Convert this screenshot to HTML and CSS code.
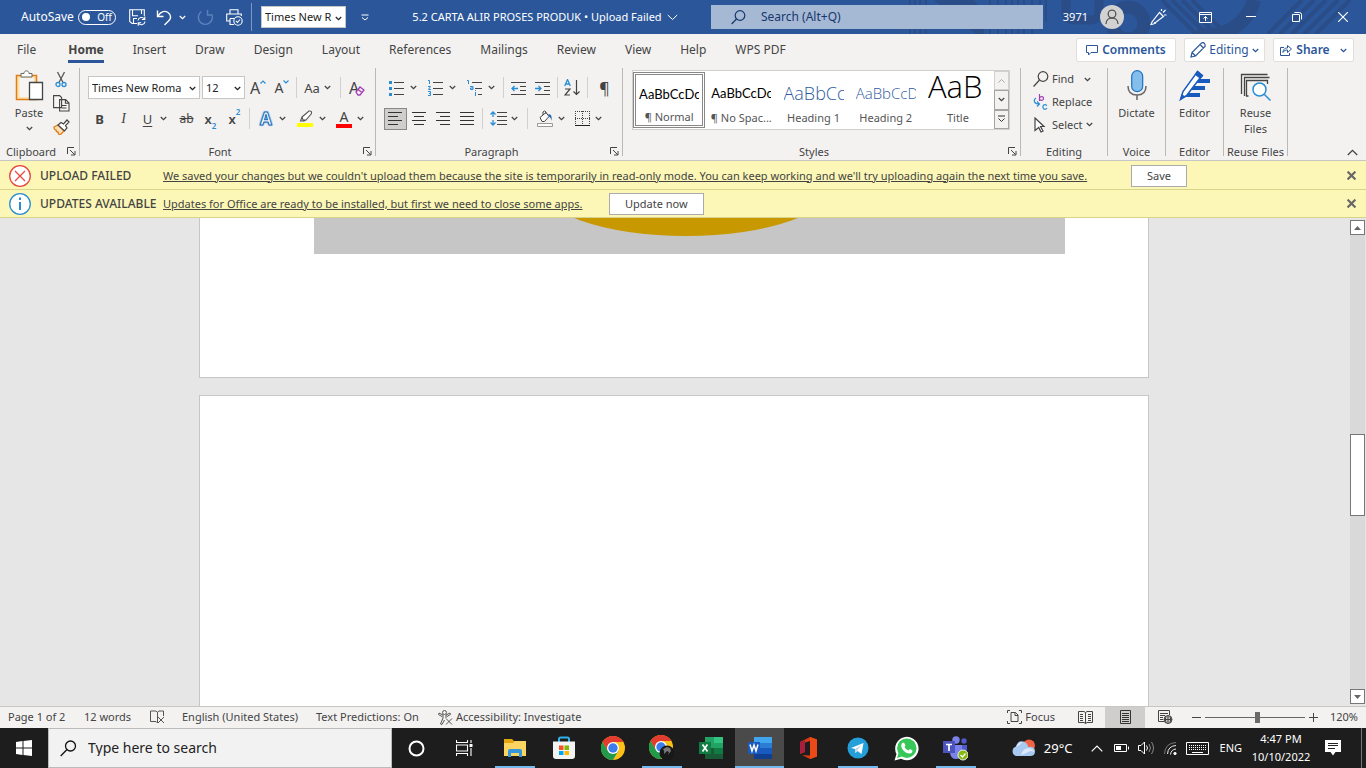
FILE: index.html
```html
<!DOCTYPE html>
<html lang="en">
<head>
<meta charset="utf-8">
<title>5.2 CARTA ALIR PROSES PRODUK - Word</title>
<link rel="stylesheet" href="styles.css">
</head>
<body>
<svg class="defs" aria-hidden="true">
  <symbol id="chev" viewBox="0 0 7 5"><path d="M.8 1l2.700 2.600L6.200 1" fill="none" stroke="currentColor" stroke-width="1.300"/></symbol>
  <symbol id="launch" viewBox="0 0 9 9"><path d="M.5 7V.5H7M3 3l4.500 4.500M8 4v4H4" fill="none" stroke="currentColor"/></symbol>
  <symbol id="cross" viewBox="0 0 8 8"><path d="M.5.500l7 7M7.500.500l-7 7" stroke="currentColor" stroke-width="1.900"/></symbol>
  <symbol id="chrome" viewBox="0 0 24 24">
    <circle cx="12" cy="12" r="12" fill="#fbc116"/>
    <path d="M12 6h10.400A12 12 0 0 0 1.600 6l5.200 9z" fill="#e33b2e"/>
    <path d="M6.800 15L1.600 6A12 12 0 0 0 12 24l5.200-9z" fill="#229a4b"/>
    <circle cx="12" cy="12" r="6" fill="#fff"/><circle cx="12" cy="12" r="4.700" fill="#3b7ded"/>
  </symbol>
</svg>

<header class="titlebar">
  <svg class="titlebar-art" viewBox="0 0 460 34" aria-hidden="true">
    <g stroke="#2a4d88" fill="none">
      <path d="M4 0v34M9 0v34M14 0v34M20 0v34" stroke-width="2"/>
      <path d="M28 0h40l10 14v20h-8z" fill="#2a4d88" stroke="none"/>
      <path d="M84 0v34M92 0v34M100 0v34M106 0v34M112 0v34M118 0v34M126 0v34M134 0v30M140 0v22" stroke-width="2"/>
      <path d="M160 0v12q0 8 8 8h16q9 0 9-8V0" stroke-width="9"/>
      <circle cx="222" cy="23" r="16" stroke-width="13"/>
      <path d="M256 0l34 34M266 0l34 34M276 0l34 34M286 0l34 34" stroke-width="4"/>
      <path d="M290 34a48 48 0 0 0 58-34" stroke-width="14"/>
      <path d="M362 34l34-34M374 34l34-34M386 34l34-34M398 34l34-34M410 34l34-34" stroke-width="4"/>
    </g>
  </svg>
  <div class="quick">
    <span class="quick-label" id="autosave">AutoSave</span>
    <button class="toggle" aria-labelledby="autosave"><span class="toggle-dot"></span>Off</button>
    <button class="quick-btn" aria-label="Save"><svg width="17" height="17" viewBox="0 0 17 17" fill="none" stroke="#fff" stroke-width="1.100"><path d="M8 14.500H3L.7 12.500V.7h14.600V7M3.500.7v6H9M12.500.7V5M4.500 14v-4.500H8"/><path d="M9 11.500a3.600 3.600 0 0 1 6.500-1.500M15.800 7.500v3h-3M16 12.500a3.600 3.600 0 0 1-6.500 1.700M9.200 16.800v-3h3"/></svg></button>
    <button class="quick-btn quick-split" aria-label="Undo"><svg width="16" height="17" viewBox="0 0 16 17" fill="none" stroke="#fff" stroke-width="1.400"><path d="M1.500 1.500v6h6M2 7C5 2 9 1.500 12 3.500c3.500 2.500 3 6 1 8L8.500 16"/></svg><svg class="chev" width="7" height="5"><use href="#chev"/></svg></button>
    <button class="quick-btn" aria-label="Redo" disabled><svg width="17" height="17" viewBox="0 0 17 17" fill="none" stroke="#5d82bd" stroke-width="1.400"><path d="M10.500 1v5h5M4.500 2.500a7 7 0 1 0 10 2.500"/></svg></button>
    <button class="quick-btn" aria-label="Print preview"><svg width="17" height="17" viewBox="0 0 17 17" fill="none" stroke="#fff" stroke-width="1.100"><path d="M4 5V.7h8V5M4 12H.7V5h14.600v2M4 9.500h4M4 9.500v6h4"/><circle cx="12" cy="12" r="4.200"/><path d="M10 12l1.500 1.500 2.500-3"/></svg></button>
    <span class="quick-sep"></span>
    <div class="field field-quick"><select aria-label="Quick font"><option>Times New R</option></select><svg class="chev" width="7" height="5"><use href="#chev"/></svg></div>
    <button class="quick-btn quick-more" aria-label="Customize toolbar"><svg width="8" height="7" viewBox="0 0 8 7" fill="none" stroke="#fff"><path d="M.5 1h7M1 3.500l3 2.500 3-2.500"/></svg></button>
  </div>
  <button class="doc-title">5.2 CARTA ALIR PROSES PRODUK • Upload Failed <svg width="11" height="7" viewBox="0 0 11 7" fill="none" stroke="#fff"><path d="M.8 1l4.700 4.500L10.200 1"/></svg></button>
  <label class="title-search"><svg width="15" height="15" viewBox="0 0 15 15" fill="none" stroke="#17376e" stroke-width="1.200"><circle cx="9" cy="5.500" r="4.800"/><path d="M5.500 9L.6 14"/></svg><input type="text" placeholder="Search (Alt+Q)" aria-label="Search"></label>
  <div class="account">
    <span>3971</span>
    <button class="avatar" aria-label="Account"><svg width="14" height="16" viewBox="0 0 14 16" fill="none" stroke="#555" stroke-width="1.300"><circle cx="7" cy="5" r="3.800"/><path d="M1 15c0-8 12-8 12 0"/></svg></button>
    <button class="win-btn" aria-label="Coming soon"><svg width="18" height="18" viewBox="0 0 18 18" fill="none" stroke="#fff" stroke-width="1.200"><path d="M9.500 4.500l4 4-10 7.500L1 16.500 2 14zM4 14.500l2 1M11.500 3V1M13 4.500L15.500 2M14 7h2.500"/></svg></button>
    <button class="win-btn" aria-label="Ribbon display"><svg width="13" height="11" viewBox="0 0 13 11" fill="none" stroke="#fff"><path d="M.5.5h12v10H.5zM.5 2.500h12M6.500 9V4.500M4.500 6.500l2-2 2 2"/></svg></button>
    <button class="win-btn" aria-label="Minimize"><svg width="10" height="10" viewBox="0 0 10 10" stroke="#fff"><path d="M0 4.500h10"/></svg></button>
    <button class="win-btn" aria-label="Restore"><svg width="10" height="10" viewBox="0 0 10 10" fill="none" stroke="#fff"><path d="M.5 2.500h7v7h-7zM2.500.5h5q2 0 2 2v5"/></svg></button>
    <button class="win-btn" aria-label="Close"><svg width="10" height="10" viewBox="0 0 10 10" stroke="#fff" stroke-width="1.100"><path d="M0 0l10 10M10 0L0 10"/></svg></button>
  </div>
</header>

<nav class="tabs">
  <button class="tab tab-file">File</button><button class="tab tab-active">Home</button><button class="tab">Insert</button><button class="tab">Draw</button><button class="tab">Design</button><button class="tab">Layout</button><button class="tab">References</button><button class="tab">Mailings</button><button class="tab">Review</button><button class="tab">View</button><button class="tab">Help</button><button class="tab">WPS PDF</button>
  <div class="tab-actions">
    <button class="action action-comments"><svg width="12" height="11" viewBox="0 0 12 11" fill="none" stroke="#2b579a"><path d="M.5.5h11v7H5l-2.500 2.500V7.500h-2z"/></svg>Comments</button>
    <button class="action action-edit"><svg width="16" height="16" viewBox="0 0 16 16" fill="none" stroke="#2b579a" stroke-width="1.200"><path d="M1 15l1-4.500L11.500 1q2-1 3 .5T15 4.500L5.500 14zM10 2.500l3.500 3.500M2 10.500L5.500 14"/></svg>Editing<svg class="chev" width="7" height="5"><use href="#chev"/></svg></button>
    <button class="action action-share"><svg width="12" height="12" viewBox="0 0 12 12" fill="none" stroke="#2b579a"><path d="M4 3.500H.5v8h9V9M3 8.500C3 5 5 4 7.500 4V1.500L11.500 5l-4 3.500V6C5.500 6 4 6.500 3 8.500z"/></svg>Share<svg class="chev share-chev" width="7" height="5"><use href="#chev"/></svg></button>
  </div>
</nav>

<section class="ribbon" aria-label="Home tools">
  <div class="group g-clipboard">
    <div class="group-body clipboard">
      <button class="big paste"><svg width="29" height="31" viewBox="0 0 29 31" fill="none"><path d="M1.500 5.500h20v24h-20z" fill="#fce3b0" stroke="#e07b16" stroke-width="1.500"/><path d="M4.500 8h14v19h-14z" fill="#f6f5f4"/><path d="M6 7V3.500h3C9 0 14 0 14 3.500h3V7z" fill="#fff" stroke="#666"/><path d="M14.500 12.500h13v17h-13z" fill="#fff" stroke="#444" stroke-width="1.300"/></svg><span>Paste</span><svg class="chev" width="7" height="5"><use href="#chev"/></svg></button>
      <div class="stack">
        <button class="mini" aria-label="Cut"><svg width="12" height="17" viewBox="0 0 12 17" fill="none"><path d="M2.500 1l5.500 10.500M9.500 1L4 11.500" stroke="#555" stroke-width="1.300"/><circle cx="3" cy="13.500" r="2" stroke="#2a8dd4" stroke-width="1.300"/><circle cx="9" cy="13.500" r="2" stroke="#2a8dd4" stroke-width="1.300"/></svg></button>
        <button class="mini" aria-label="Copy"><svg width="17" height="17" viewBox="0 0 17 17" fill="#f6f5f4" stroke="#444" stroke-width="1.100"><path d="M.6.600h6l2 2v10h-8zM6.600 4.600h6l3.400 3.400v8H6.600zM12.400 4.600v3.600H16M9 10.500h4.500M9 13h4.500"/></svg></button>
        <button class="mini" aria-label="Format painter"><svg width="17" height="16" viewBox="0 0 17 16"><path d="M1 8l4-2 6 6-4 4q-2-1-2-3-2 0-2-2-2 0-2-3z" fill="#fbe2b8" stroke="#e07b16" stroke-width="1.300"/><path d="M5 6l3-2.500 2.500 1.500L14 1l2 2-3.500 3.500L14 9l-2.500 3z" fill="#fff" stroke="#444" stroke-width="1.200"/></svg></button>
      </div>
    </div>
    <div class="group-label">Clipboard<button class="launch" aria-label="Clipboard options"><svg width="9" height="9"><use href="#launch"/></svg></button></div>
  </div>

  <div class="group g-font">
    <div class="group-body rows">
      <div class="row row-fonts">
        <div class="field field-font"><select aria-label="Font"><option>Times New Roma</option></select><svg class="chev" width="7" height="5"><use href="#chev"/></svg></div>
        <div class="field field-size"><select aria-label="Font size"><option>12</option></select><svg class="chev" width="7" height="5"><use href="#chev"/></svg></div>
        <button class="tool" aria-label="Grow font"><span class="glyph-lg">A</span><svg class="sup" width="6" height="4" viewBox="0 0 6 4" fill="none" stroke="#2a8dd4" stroke-width="1.200"><path d="M.5 3.500L3 1l2.500 2.500"/></svg></button>
        <button class="tool" aria-label="Shrink font"><span class="glyph-md">A</span><svg class="sup" width="6" height="4" viewBox="0 0 6 4" fill="none" stroke="#2a8dd4" stroke-width="1.200"><path d="M.5.500L3 3 5.500.500"/></svg></button>
        <span class="sep"></span>
        <button class="tool tool-case" aria-label="Change case"><span>Aa</span><svg class="chev" width="7" height="5"><use href="#chev"/></svg></button>
        <span class="sep sep-wide"></span>
        <button class="tool tool-clear" aria-label="Clear formatting"><span class="glyph-lg">A</span><svg width="10" height="10" viewBox="0 0 10 10" fill="#f3f0f5" stroke="#a33fb5" stroke-width="1.300"><path d="M1 6l4-5 4 3-4 5H3zM3 3.500l4 3"/></svg></button>
      </div>
      <div class="row row-tight">
        <button class="tool bold" aria-label="Bold">B</button>
        <button class="tool italic" aria-label="Italic">I</button>
        <button class="tool tool-split" aria-label="Underline"><span class="under">U</span><svg class="chev" width="7" height="5"><use href="#chev"/></svg></button>
        <button class="tool strike" aria-label="Strikethrough">ab</button>
        <button class="tool script" aria-label="Subscript">x<sub>2</sub></button>
        <button class="tool script" aria-label="Superscript">x<sup>2</sup></button>
        <span class="sep"></span>
        <button class="tool tool-color" aria-label="Text effects"><span class="effect">A</span><svg class="chev" width="7" height="5"><use href="#chev"/></svg></button>
        <button class="tool tool-color" aria-label="Highlight"><svg width="17" height="17" viewBox="0 0 17 17"><path d="M5 7l7-6q3-.5 2.500 2.500L9 10H6zM5 7l-1.500 4H7L9 10" fill="#fff" stroke="#555" stroke-width="1.100"/><path d="M0 13h16v4H0z" fill="#ff0"/></svg><svg class="chev" width="7" height="5"><use href="#chev"/></svg></button>
        <button class="tool tool-color" aria-label="Font color"><span class="fontcolor">A</span><svg class="chev" width="7" height="5"><use href="#chev"/></svg></button>
      </div>
    </div>
    <div class="group-label">Font<button class="launch" aria-label="Font options"><svg width="9" height="9"><use href="#launch"/></svg></button></div>
  </div>

  <div class="group g-para">
    <div class="group-body rows">
      <div class="row row-tight">
        <button class="tool tool-para" aria-label="Bullets"><svg width="16" height="16" viewBox="0 0 16 16"><path d="M0 1h3v3H0zM0 7h3v3H0zM0 13h3v3H0z" fill="#2a8dd4"/><path d="M5 2.500h10M5 8.500h10M5 14.500h10" stroke="#444"/></svg><svg class="chev" width="7" height="5"><use href="#chev"/></svg></button>
        <button class="tool tool-para" aria-label="Numbering"><svg width="16" height="16" viewBox="0 0 16 16" fill="none"><path d="M5 2.500h10M5 8.500h10M5 14.500h10" stroke="#444"/><path d="M0 .5h1.500v3.500M0 6.500h2.500L.5 9.500h2.500M0 11.500h2.500v2H1m1.500 0v2H0" stroke="#2a8dd4"/></svg><svg class="chev" width="7" height="5"><use href="#chev"/></svg></button>
        <button class="tool tool-para" aria-label="Multilevel list"><svg width="16" height="16" viewBox="0 0 16 16" fill="none"><path d="M5 2.500h10M8 8.500h7M11 14.500h4" stroke="#444"/><path d="M0 .5h1.500v3.500M3 6.500h3v3H3.500v-1.500H6M8.500 12v4M8.500 10v1" stroke="#2a8dd4"/></svg><svg class="chev" width="7" height="5"><use href="#chev"/></svg></button>
        <span class="sep"></span>
        <button class="tool" aria-label="Decrease indent"><svg width="15" height="14" viewBox="0 0 15 14" fill="none"><path d="M0 1.500h15M9 5.500h6M9 9.500h6M0 13.500h15" stroke="#444"/><path d="M7 7.500H1M3.500 5L1 7.500 3.500 10" stroke="#2a8dd4" stroke-width="1.300"/></svg></button>
        <button class="tool" aria-label="Increase indent"><svg width="15" height="14" viewBox="0 0 15 14" fill="none"><path d="M0 1.500h15M9 5.500h6M9 9.500h6M0 13.500h15" stroke="#444"/><path d="M0 7.500h6M3.500 5L6 7.500 3.500 10" stroke="#2a8dd4" stroke-width="1.300"/></svg></button>
        <span class="sep"></span>
        <button class="tool" aria-label="Sort"><svg width="17" height="17" viewBox="0 0 17 17" fill="none"><path d="M.7 7L3.500.500 6.300 7M1.500 5h4" stroke="#2a8dd4" stroke-width="1.300"/><path d="M1 10h5l-5 6h5M12.500 1v15M9.500 12.500l3 3 3-3" stroke="#444" stroke-width="1.200"/></svg></button>
        <span class="sep"></span>
        <button class="tool pilcrow" aria-label="Show marks">¶</button>
      </div>
      <div class="row row-tight">
        <button class="tool tool-on" aria-label="Align left"><svg width="15" height="14" viewBox="0 0 15 14" stroke="#333"><path d="M0 .5h14M0 4.500h10M0 8.500h14M0 12.500h10"/></svg></button>
        <button class="tool" aria-label="Center"><svg width="15" height="14" viewBox="0 0 15 14" stroke="#333"><path d="M0 .5h14M2 4.500h10M0 8.500h14M2 12.500h10"/></svg></button>
        <button class="tool" aria-label="Align right"><svg width="15" height="14" viewBox="0 0 15 14" stroke="#333"><path d="M0 .5h14M4 4.500h10M0 8.500h14M4 12.500h10"/></svg></button>
        <button class="tool" aria-label="Justify"><svg width="15" height="14" viewBox="0 0 15 14" stroke="#333"><path d="M0 .5h14M0 4.500h14M0 8.500h14M0 12.500h14"/></svg></button>
        <span class="sep"></span>
        <button class="tool tool-fill" aria-label="Line spacing"><svg width="17" height="15" viewBox="0 0 17 15" fill="none"><path d="M7 1.500h10M7 5.500h10M7 9.500h10M7 13.500h10" stroke="#444"/><path d="M3 1v5M.5 3.500L3 1l2.500 2.500M3 9v5M.5 11.500L3 14l2.500-2.500" stroke="#2a8dd4" stroke-width="1.300"/></svg><svg class="chev" width="7" height="5"><use href="#chev"/></svg></button>
        <span class="sep sep-wide"></span>
        <button class="tool tool-fill" aria-label="Shading"><svg width="17" height="17" viewBox="0 0 17 17" fill="none"><path d="M3 7.500l6-5 3 4-4.500 5H5zM6 5V2q1.500-2 3 0v2" stroke="#444" fill="#fff"/><path d="M11.500 4q4 0 3 7-.5-4-3-4.500z" fill="#2566b0"/><path d="M.5 13.500h15v3H.5z" fill="#fff" stroke="#999"/></svg><svg class="chev" width="7" height="5"><use href="#chev"/></svg></button>
        <button class="tool tool-fill" aria-label="Borders"><svg width="16" height="16" viewBox="0 0 16 16"><path d="M0 .5h15M0 7.500h15M.5 0v15M7.500 0v15M14.500 0v15" stroke="#444" stroke-dasharray="1 1"/><path d="M0 14.500h15" stroke="#222"/></svg><svg class="chev" width="7" height="5"><use href="#chev"/></svg></button>
      </div>
    </div>
    <div class="group-label">Paragraph<button class="launch" aria-label="Paragraph options"><svg width="9" height="9"><use href="#launch"/></svg></button></div>
  </div>

  <div class="group g-styles">
    <div class="group-body">
      <div class="gallery">
        <button class="style style-on"><span class="sample">AaBbCcDc</span><span>¶ Normal</span></button>
        <button class="style"><span class="sample">AaBbCcDc</span><span>¶ No Spac...</span></button>
        <button class="style"><span class="sample sample-h1">AaBbCc</span><span>Heading 1</span></button>
        <button class="style"><span class="sample sample-h2">AaBbCcD</span><span>Heading 2</span></button>
        <button class="style"><span class="sample sample-title">AaB</span><span>Title</span></button>
        <div class="gallery-nav">
          <button disabled aria-label="Previous styles"><svg width="7" height="4" viewBox="0 0 7 4" fill="none" stroke="#aaa"><path d="M.5 3.500l3-3 3 3"/></svg></button>
          <button aria-label="Next styles"><svg width="7" height="5"><use href="#chev"/></svg></button>
          <button aria-label="More styles"><svg width="7" height="8" viewBox="0 0 7 8" fill="none" stroke="#333"><path d="M0 1h7M.5 3.500l3 3 3-3"/></svg></button>
        </div>
      </div>
    </div>
    <div class="group-label">Styles<button class="launch" aria-label="Style options"><svg width="9" height="9"><use href="#launch"/></svg></button></div>
  </div>

  <div class="group g-editing">
    <div class="group-body edit-list">
      <button class="edit"><svg width="16" height="16" viewBox="0 0 16 16" fill="none" stroke="#444" stroke-width="1.200"><circle cx="10" cy="5.500" r="4.800"/><path d="M6.500 9L.6 15.500"/></svg>Find<svg class="chev find-chev" width="7" height="5"><use href="#chev"/></svg></button>
      <button class="edit"><svg width="16" height="16" viewBox="0 0 16 16" fill="none" stroke-width="1.200"><path d="M6.500 0v7M6.500 4.500c0-2.500 4-2.500 4 0s-4 2.500-4 0" stroke="#a33fb5"/><path d="M14 11.500c-3-2-4.500 0-4 2s2.500 2.500 4 .5M3 4C0 6 1 10 6 10M4 7.500L6.500 10 4 12.500" stroke="#2a8dd4"/></svg>Replace</button>
      <button class="edit"><svg width="16" height="16" viewBox="0 0 16 16" fill="#fff" stroke="#444" stroke-width="1.200"><path d="M2 1l9 8.500H7.500L10 14l-2 1-2.300-4.500L2 13.500z"/></svg>Select<svg class="chev" width="7" height="5"><use href="#chev"/></svg></button>
    </div>
    <div class="group-label">Editing</div>
  </div>
  <div class="group g-one">
    <div class="group-body"><button class="big"><svg width="20" height="31" viewBox="0 0 20 31" fill="none"><rect x="4.700" y=".7" width="11" height="21" rx="5.500" fill="#83beec" stroke="#1e72bd" stroke-width="1.200"/><path d="M1 16c0 6 3.500 9 9 9s9-3 9-9M10 25v5" stroke="#666" stroke-width="1.500"/></svg><span>Dictate</span></button></div>
    <div class="group-label">Voice</div>
  </div>
  <div class="group g-one">
    <div class="group-body"><button class="big"><svg width="31" height="31" viewBox="0 0 31 31"><path d="M16 9h15v4H13zM13 16h13v4H10zM9 23h12v4H5z" fill="#185abd"/><path d="M18.500 1.500l4.500 4L8 25l-6.500 4.500L4 21.500z" fill="#fff" stroke="#185abd" stroke-width="1.500"/><path d="M18.500.500l6 5-3 3.500-6-4.500zM1 30l1.500-6 4.500 3z" fill="#185abd"/></svg><span>Editor</span></button></div>
    <div class="group-label">Editor</div>
  </div>
  <div class="group g-reuse">
    <div class="group-body"><button class="big"><svg width="31" height="31" viewBox="0 0 31 31" fill="none"><path d="M1.500 24V4.500h26M4.500 26V7.500h25M8.500 26h-2V10.500h21V14" stroke="#444" stroke-width="1.300"/><circle cx="19.500" cy="19.500" r="6.500" fill="#fff" stroke="#2a8dd4" stroke-width="1.500"/><path d="M24 24l6.500 6.500" stroke="#2a8dd4" stroke-width="1.500"/></svg><span>Reuse<br>Files</span></button></div>
    <div class="group-label">Reuse Files</div>
  </div>
  <button class="collapse" aria-label="Collapse ribbon"><svg width="11" height="7" viewBox="0 0 11 7" fill="none" stroke="#444" stroke-width="1.300"><path d="M.8 6l4.700-4.700L10.200 6"/></svg></button>
</section>

<div class="notice">
  <svg width="22" height="22" viewBox="0 0 22 22" fill="none" stroke="#e8473f"><circle cx="11" cy="11" r="10.300" fill="#fff" stroke-width="1.300"/><path d="M6 6l10 10M16 6L6 16" stroke-width="1.300"/></svg>
  <strong>UPLOAD FAILED</strong>
  <div class="notice-text notice-long"><a href="#">We saved your changes but we couldn't upload them because the site is temporarily in read-only mode. You can keep working and we'll try uploading again the next time you save.</a></div>
  <button class="notice-btn">Save</button>
  <button class="notice-close" aria-label="Dismiss"><svg width="9" height="9"><use href="#cross"/></svg></button>
</div>
<div class="notice">
  <svg width="22" height="22" viewBox="0 0 22 22" fill="none" stroke="#2a8dd4"><circle cx="11" cy="11" r="10.300" fill="#fff" stroke-width="1.300"/><path d="M11 4.500v2.500M11 9v8" stroke-width="2"/></svg>
  <strong>UPDATES AVAILABLE</strong>
  <div class="notice-text"><a href="#">Updates for Office are ready to be installed, but first we need to close some apps.</a></div>
  <button class="notice-btn">Update now</button>
  <button class="notice-close" aria-label="Dismiss"><svg width="9" height="9"><use href="#cross"/></svg></button>
</div>

<main class="workspace">
  <div class="pages">
    <article class="page page-end"><svg class="figure" viewBox="0 0 751 36"><path d="M0 0h751v36H0z" fill="#c6c6c6"/><ellipse cx="372" cy="-36" rx="150" ry="54" fill="#c89800"/></svg></article>
    <article class="page page-next"></article>
  </div>
  <div class="scroll">
    <button aria-label="Scroll up"><svg width="7" height="4" viewBox="0 0 7 4"><path d="M0 4l3.500-4L7 4z" fill="#666"/></svg></button>
    <span class="scroll-before"></span><span class="scroll-thumb"></span><span class="scroll-after"></span>
    <button aria-label="Scroll down"><svg width="7" height="4" viewBox="0 0 7 4"><path d="M0 0l3.500 4L7 0z" fill="#666"/></svg></button>
  </div>
</main>

<footer class="status">
  <span class="s-page">Page 1 of 2</span>
  <span class="s-words">12 words</span>
  <svg class="s-proof" width="15" height="14" viewBox="0 0 15 14" fill="none" stroke="#555"><path d="M7.500 2.500L6 1H.5v10.500H6L7.500 13V2l1.500-1h4.500v5M8 7l6 6M14 7l-6 6"/></svg>
  <span class="s-lang">English (United States)</span>
  <span class="s-pred">Text Predictions: On</span>
  <svg class="s-acc" width="15" height="15" viewBox="0 0 15 15" fill="none" stroke="#555"><circle cx="6.500" cy="2.500" r="2"/><path d="M1 3l4 2v3l-2.500 6 1.500.500L6.500 10M12 3L8 5v3M1 3l-.5 1.500L4 6.500M12 3l.5 1.500L9 6.500M8 8.500l6 6M14 8.500l-6 6"/></svg>
  <span>Accessibility: Investigate</span>
  <div class="status-right">
    <button class="focus"><svg width="15" height="14" viewBox="0 0 15 14" fill="none" stroke="#444"><path d="M3 .5H.5V3M12 .5h2.500V3M3 13.500H.5V11M12 13.500h2.500V11M4 2.500h4.500L11 5v6.500H4zM8 2.500v3h3"/></svg>Focus</button>
    <button class="view" aria-label="Read mode"><svg width="15" height="13" viewBox="0 0 15 13" fill="none" stroke="#444"><path d="M7.500 1.500L6 .5H.5v11H6l1.500 1V1.500L9 .5h5.500v11H9l-1.500 1M2 3.500h3M2 5.500h3M2 7.500h3M2 9.500h3M10 3.500h3M10 5.500h3M10 7.500h3M10 9.500h3"/></svg></button>
    <button class="view view-on" aria-label="Print layout"><svg width="11" height="14" viewBox="0 0 11 14" fill="none" stroke="#333"><path d="M.5.5h10v13H.5zM2 3.500h7M2 5.500h7M2 7.500h7M2 9.500h7M2 11.500h7"/></svg></button>
    <button class="view" aria-label="Web layout"><svg width="15" height="14" viewBox="0 0 15 14" fill="none" stroke="#444"><path d="M6 11.500H.5V.5h11V5M2 3.500h8M2 5.500h5M2 7.500h3M2 9.500h3"/><circle cx="10" cy="9.500" r="4" fill="#ccc"/><path d="M6 9.500h8M10 5.500v8M8 6.500q-1.500 3 0 6M12 6.500q1.500 3 0 6"/></svg></button>
    <button class="zoom-step" aria-label="Zoom out"><svg width="9" height="9" viewBox="0 0 9 9" stroke="#444"><path d="M0 4.500h9"/></svg></button>
    <input class="zoom" type="range" min="0" max="100" value="53" aria-label="Zoom">
    <button class="zoom-step" aria-label="Zoom in"><svg width="9" height="9" viewBox="0 0 9 9" stroke="#444"><path d="M0 4.500h9M4.500 0v9"/></svg></button>
    <span class="zoom-value">120%</span>
  </div>
</footer>

<nav class="taskbar" aria-label="Taskbar">
  <button class="start" aria-label="Start"><svg width="16" height="16" viewBox="0 0 16 16" fill="#fff"><path d="M0 2l6.500-1v6.500H0zM7.500 1L16 0v7.500H7.500zM0 8.500h6.500V15L0 14zM7.500 8.500H16V16l-8.500-1z"/></svg></button>
  <label class="task-search"><svg width="17" height="17" viewBox="0 0 17 17" fill="none" stroke="#111" stroke-width="1.300"><circle cx="10.500" cy="6" r="5"/><path d="M7 9.500L.7 16"/></svg><input type="text" placeholder="Type here to search" aria-label="Type here to search"></label>
  <button class="task-sys" aria-label="Cortana"><svg width="17" height="17" viewBox="0 0 17 17" fill="none" stroke="#fff" stroke-width="2"><circle cx="8.500" cy="8.500" r="7"/></svg></button>
  <button class="task-sys" aria-label="Task view"><svg width="17" height="16" viewBox="0 0 17 16" fill="none" stroke="#fff" stroke-width="1.100"><path d="M.5 0v2.500h11V0M.5 5h11v6H.5zM.5 16v-2.500h11V16M15 0v3M15 8v8"/><path d="M13.500 4h3v3h-3z" fill="#fff" stroke="none"/></svg></button>
  <div class="apps">
    <button class="app app-run" aria-label="File Explorer"><svg width="22" height="20" viewBox="0 0 22 20"><path d="M0 1h8l2 2h11v5H0z" fill="#e5a50f"/><path d="M0 5h9l2-2h11v15H0z" fill="#fcd462"/><path d="M4 19v-6q0-2 2-2h10q2 0 2 2v6h-3v-4H7v4z" fill="#3597dd"/></svg></button>
    <button class="app" aria-label="Store"><svg width="24" height="24" viewBox="0 0 24 24"><path d="M7 6V3q0-1.500 1.500-1.500h7Q17 1.500 17 3v3" fill="none" stroke="#31b0ea" stroke-width="2"/><path d="M1 5.500h22V20q0 3-3 3H4q-3 0-3-3z" fill="#f3f3f3"/><path d="M7 9.500h4.500V14H7z" fill="#f25022"/><path d="M12.500 9.500H17V14h-4.500z" fill="#7fba00"/><path d="M7 15h4.500v4H7z" fill="#00a4ef"/><path d="M12.500 15H17v4h-4.500z" fill="#ffb900"/></svg></button>
    <button class="app" aria-label="Chrome"><svg width="24" height="24"><use href="#chrome"/></svg></button>
    <button class="app app-run" aria-label="Chrome profile"><svg width="25" height="26" viewBox="0 0 25 26"><use href="#chrome" width="24" height="24"/><circle cx="18" cy="18" r="7.500" fill="#181818"/><path d="M14 14q2 2 1 5l3-3 2 1-1 3 3-4-1-3-3-1z" fill="#777"/></svg></button>
    <button class="app" aria-label="Excel"><svg width="24" height="22" viewBox="0 0 24 22"><path d="M6 0h18v22H6z" fill="#21a366"/><path d="M15 0h9v6h-9z" fill="#33c481"/><path d="M6 11h9v11H6z" fill="#185c37"/><path d="M15 11h9v6h-9z" fill="#107c41"/><path d="M15 17h9v5h-9z" fill="#185c37"/><path d="M0 5h12v12H0z" fill="#107c41"/><path d="M3.500 7.500l5 7M8.500 7.500l-5 7" stroke="#fff" stroke-width="1.700"/></svg></button>
    <button class="app app-active" aria-label="Word"><svg width="24" height="22" viewBox="0 0 24 22"><path d="M6 0h18v6H6z" fill="#41a5ee"/><path d="M6 6h18v5H6z" fill="#2b7cd3"/><path d="M6 11h18v6H6z" fill="#185abd"/><path d="M6 17h18v5H6z" fill="#103f91"/><path d="M0 5h12v12H0z" fill="#185abd"/><path d="M2 7.500L4 14l2-6 2 6 2-6.500" fill="none" stroke="#fff" stroke-width="1.500"/></svg></button>
    <button class="app" aria-label="Office"><svg width="19" height="22" viewBox="0 0 19 22"><path d="M1 5L11 0l7 2.500v17L11 22 3 18l8 .500V4L6 5.500V15l-5 2z" fill="#d83b12"/><path d="M11 0l7 2.500v17L11 22z" fill="#eb4a18"/><path d="M1 5l5-2.500v12L1 17z" fill="#a81e3c"/></svg></button>
    <button class="app app-run" aria-label="Telegram"><svg width="22" height="22" viewBox="0 0 22 22"><circle cx="11" cy="11" r="10.500" fill="#259fda"/><path d="M4 11l12.500-5-2 11-4-3-2 2-.5-4z" fill="#fff"/><path d="M8 12l6-4-3.500 5-2 3z" fill="#bcd9e9"/></svg></button>
    <button class="app" aria-label="WhatsApp"><svg width="25" height="25" viewBox="0 0 25 25"><path d="M.5 24.500l2-6.500A11.700 11.700 0 1 1 7 22.700z" fill="#fff"/><circle cx="12.800" cy="12.200" r="9.700" fill="#36c758"/><path d="M3 22l1.500-5L8 20.500z" fill="#36c758"/><path d="M8 7l2-.5 1.500 3-1 1.500q1.500 3 4 3.500l1.500-1.500 2.500 1.500q0 3-3 3-3.500 0-6.500-3.500T8 7z" fill="#fff"/></svg></button>
    <button class="app app-run" aria-label="Teams"><svg width="25" height="25" viewBox="0 0 25 25"><circle cx="13" cy="4" r="3.700" fill="#7b83eb"/><circle cx="21" cy="5" r="2.700" fill="#5059c9"/><path d="M17 9h7v8q-2 4-7 3z" fill="#5059c9"/><path d="M7 9h12v8q-1 6-6 6t-6-6z" fill="#7b83eb"/><path d="M0 5h12v12H0z" fill="#4b53bc"/><path d="M3 8.500h6M6 8.500V15" stroke="#fff" stroke-width="1.700"/><circle cx="20" cy="19" r="5" fill="#85b90c" stroke="#eee"/><path d="M17.500 19l2 2 3-3.500" fill="none" stroke="#fff" stroke-width="1.300"/></svg></button>
  </div>
  <div class="tray">
    <button class="weather"><svg width="25" height="18" viewBox="0 0 25 18"><circle cx="18" cy="6.500" r="6" fill="#f26344"/><path d="M5 17a5 5 0 0 1 0-9.500Q7 1 12.500 2.500 17 4 17 8q7-1 7 4.500 0 4.500-5 4.500z" fill="#a9caf0"/><path d="M5 8q2-5 7-5-4 4-7 5zM10 16q2-7 8-7 5 1 5 4-3-2-6 0t-7 3z" fill="#dbe9fa"/></svg><span>29°C</span></button>
    <button class="t-up" aria-label="Hidden icons"><svg width="12" height="7" viewBox="0 0 12 7" fill="none" stroke="#fff" stroke-width="1.200"><path d="M.7 6.300L6 1l5.300 5.300"/></svg></button>
    <svg width="15" height="8" viewBox="0 0 15 8" fill="none" stroke="#fff"><path d="M.5.5h12v7H.5zM14.500 2.500v3"/><path d="M2 2h5v4H2z" fill="#fff" stroke="none"/></svg>
    <svg width="17" height="14" viewBox="0 0 17 14" fill="none" stroke="#fff"><path d="M.5 4.500H3L6.500 1v12L3 9.500H.5zM8.500 4.500q2 2.500 0 5"/><path d="M11 3q3 4 0 8M13.500 1q4 6 0 12" stroke="#888"/></svg>
    <svg width="13" height="13" viewBox="0 0 13 13" fill="none" stroke="#eee"><path d="M.5 12Q1 1 12 .5" stroke="#777"/><path d="M3.500 12Q4 4 12 3.500M6.500 12.500q.5-5 5.500-5.500"/><circle cx="11" cy="11.500" r="1.200" fill="#fff"/></svg>
    <svg width="23" height="13" viewBox="0 0 23 13" fill="none" stroke="#fff"><path d="M.5.5h22v12H.5zM6 10.500h11"/><path d="M3 3.500h17M3 5.500h17M3 7.500h17" stroke-dasharray="1 1"/></svg>
    <span class="eng">ENG</span>
    <div class="clock"><span>4:47 PM</span><span>10/10/2022</span></div>
    <button class="bell" aria-label="Notifications"><svg width="16" height="16" viewBox="0 0 16 16"><path d="M0 0h16v12h-5.500L8 15.500 5.500 12H0z" fill="#fff"/><path d="M3 3.500h10M3 5.500h10M3 8.500h7" stroke="#222"/></svg></button>
  </div>
  <button class="peek" aria-label="Show desktop"></button>
</nav>
</body>
</html>
```
FILE: styles.css
```css
* { box-sizing: border-box; }
body {
  margin: 0;
  height: 100vh;
  display: flex;
  flex-direction: column;
  overflow: hidden;
  background: #e6e6e6;
  color: #444;
  font: 12px/16px "Noto Sans", "Open Sans", sans-serif;
}
button, input, select { font: inherit; color: inherit; }
button { margin: 0; padding: 0; border: 0; background: none; display: flex; align-items: center; justify-content: center; white-space: nowrap; }
svg { flex: none; }
.defs { position: absolute; width: 0; height: 0; }

/* Title bar */
.titlebar { position: relative; height: 34px; flex: none; display: flex; align-items: center; background: #2b579a; color: #fff; }
.titlebar > * { position: relative; }
.titlebar .titlebar-art { position: absolute; right: 0; top: 0; width: 460px; height: 34px; }
.quick { width: 384px; flex: none; display: flex; align-items: center; padding-left: 21px; }
.quick-label { width: 57px; white-space: nowrap; }
.toggle { width: 38px; height: 15px; border: 1px solid #fff; border-radius: 8px; gap: 7px; font-size: 10px; line-height: 12px; margin-right: 9px; }
.toggle-dot { width: 8px; height: 8px; border-radius: 50%; background: #fff; }
.quick-btn { width: 24px; height: 28px; margin-right: 5px; }
.quick-split { width: 34px; gap: 7px; }
.quick-sep { width: 1px; height: 28px; margin-right: 9px; background: #7d97c0; }
.quick-more { width: 37px; margin: 0; }
.doc-title { flex: 1 1 327px; gap: 5px; padding-right: 5px; font-size: 11px; }
.title-search { flex: 1 1 332px; height: 24px; display: flex; align-items: center; gap: 12px; padding-left: 20px; background: #a5b9d4; }
.title-search input { flex: 1; min-width: 0; padding: 0 3px; border: 0; background: none; }
.title-search input::placeholder { color: #17376e; opacity: 1; }
.account { width: 323px; flex: none; display: flex; align-items: center; justify-content: flex-end; font-size: 11px; }
.avatar { width: 24px; height: 24px; margin: 0 12px; border-radius: 50%; background: #d2d2d2; }
.win-btn { width: 46px; height: 32px; }

/* Drop-down fields */
.field { position: relative; height: 23px; flex: none; background: #fff; border: 1px solid #c6c6c6; color: #222; font-size: 11px; }
.field select { width: 100%; height: 100%; padding: 0 12px 0 3px; border: 0; background: none; appearance: none; overflow: hidden; }
.field .chev { position: absolute; right: 3px; top: 9px; }
.field-quick { width: 85px; height: 22px; }
.field-font { width: 112px; margin-right: 2px; }
.field-size { width: 43px; margin-right: 1px; }

/* Tabs */
.tabs { height: 32px; flex: none; display: flex; align-items: center; padding: 0 12px 0 17px; gap: 29px; background: #f3f2f1; }
.tab { height: 25px; border-bottom: 3px solid transparent; border-top: 3px solid transparent; }
.tab-file { margin-right: 3px; }
.tab-active { font-weight: 700; border-bottom-color: #2b579a; }
.tab-actions { margin-left: auto; display: flex; gap: 8px; color: #2b579a; }
.action { height: 24px; gap: 4px; background: #fff; border: 1px solid #e1dfdd; border-radius: 2px; }
.action-comments { width: 100px; font-weight: 600; }
.action-edit { width: 81px; gap: 3px; }
.action-share { width: 81px; font-weight: 600; }
.share-chev { margin-left: 6px; }

/* Ribbon */
.ribbon { height: 95px; flex: none; display: flex; padding: 2px 0 4px; font-size: 11px; background: #f3f2f1; border-bottom: 1px solid #c8c6c4; }
.group { display: flex; flex-direction: column; flex: none; border-right: 1px solid #bbb9b7; }
.group-body { flex: 1; }
.group-label { position: relative; height: 12px; line-height: 15px; padding-right: 15px; text-align: center; white-space: nowrap; }
.g-clipboard .group-label { text-align: left; padding-left: 6px; }
.launch { position: absolute; right: 3px; top: 3px; }
.g-clipboard { width: 80px; }
.g-font { width: 296px; }
.g-para { width: 247px; }
.g-styles { width: 398px; }
.g-editing { width: 87px; }
.g-one { width: 58px; }
.g-reuse { width: 64px; }
.g-editing .group-label, .g-one .group-label, .g-reuse .group-label { padding-right: 0; }
.clipboard { display: flex; padding-left: 12px; gap: 6px; }
.big { width: 100%; flex-direction: column; padding-top: 2px; gap: 4px; line-height: 16px; }
.paste { width: 34px; justify-content: flex-start; }
.paste .chev { margin-top: 1px; }
.stack { display: flex; flex-direction: column; gap: 4px; padding-top: 1px; }
.mini { width: 18px; height: 20px; }

.rows { display: flex; flex-direction: column; gap: 8px; padding-top: 8px; }
.row { display: flex; align-items: center; height: 23px; padding-left: 8px; }
.row-tight { gap: 1px; }
.tool { width: 23px; height: 22px; flex: none; }
.row-fonts .tool { width: 24px; }
.sep { width: 1px; height: 21px; flex: none; margin: 0 2px; background: #d2d0ce; }
.sep-wide { margin: 0 4px; }
.glyph-lg { font-size: 16px; }
.glyph-md { font-size: 14px; }
.sup { align-self: flex-start; margin-top: 3px; }
.row-fonts .tool-case { width: 37px; gap: 4px; font-size: 13px; }
.tool-clear svg { align-self: flex-end; margin: 0 0 3px -4px; }
.bold { font-weight: 700; font-size: 13px; }
.italic { font: italic 14px/16px "Liberation Serif", serif; }
.tool-split { width: 38px; gap: 8px; }
.under { font-size: 13px; text-decoration: underline; text-underline-offset: 2px; }
.strike { font-size: 12px; text-decoration: line-through; }
.script { font-size: 13px; font-weight: 600; }
.script sub, .script sup { font-size: 8px; line-height: 8px; color: #2a8dd4; }
.script sub { align-self: flex-end; }
.script sup { align-self: flex-start; }
.tool-color { width: 38px; gap: 5px; }
.tool-fill { width: 36px; gap: 4px; }
.effect { width: 16px; font-size: 17px; font-weight: 700; color: #fff; -webkit-text-stroke: 1px #1b6cb8; text-shadow: 0 0 2px #2a8dd4, 0 0 2px #58aef0; }
.fontcolor { width: 16px; height: 18px; line-height: 14px; font-size: 14px; border-bottom: 4px solid #f00; }
.tool-para { width: 38px; gap: 5px; }
.pilcrow { font-size: 16px; width: 27px; }
.tool-on { background: #d0cecc; border: 1px solid #8a8886; }

.gallery { margin: 2px 10px 0 9px; height: 60px; display: flex; border: 1px solid #d2d0ce; background: #fff; }
.style { flex: 1 1 72px; min-width: 0; flex-direction: column; justify-content: flex-end; padding-bottom: 2px; margin: 1px 0; color: #555; }
.style-on { border: 3px double #8a8886; padding-bottom: 0; background: #fff; }
.sample { width: 60px; height: 36px; overflow: hidden; text-align: left; color: #000; font: 13px/38px Lato, sans-serif; }
.sample-h1 { color: #2f5b9f; font: 300 18px/38px "Open Sans", sans-serif; }
.sample-h2 { color: #2f5b9f; font: 300 15px/38px "Open Sans", sans-serif; }
.sample-title { font: 300 31px/25px "Open Sans", sans-serif; }
.gallery-nav { width: 15px; flex: none; display: flex; flex-direction: column; }
.gallery-nav button { flex: 1; border: 1px solid #a6a4a2; background: #f3f2f1; }
.gallery-nav button:disabled { border-color: #d2d0ce; }
.edit-list { padding-left: 12px; }
.edit { height: 23px; gap: 3px; }
.edit:first-child { height: 22px; }
.find-chev { margin-left: 7px; }
.collapse { margin: auto 8px 0 auto; }

/* Notices */
.notice { height: 29px; flex: none; display: flex; align-items: center; padding: 1px 10px 0 9px; background: #fcf7b6; border-bottom: 1px solid #d9d48c; }
.notice + .notice { height: 28px; padding-top: 0; }
.notice strong { width: 132px; padding-left: 9px; flex: none; font-weight: 500; white-space: nowrap; }
.notice-text { flex: 0 1 425px; white-space: nowrap; font-size: 11px; }
.notice-long { flex-basis: 947px; }
.notice a { color: inherit; }
.notice-btn { height: 22px; margin-left: 21px; padding: 0 15px; font-size: 11px; background: #fff; border: 1px solid #ababab; }
.notice-close { margin-left: auto; width: 10px; height: 16px; color: #666; }

/* Document area */
.workspace { flex: 1; min-height: 0; display: flex; background: #e6e6e6; }
.pages { flex: 1; display: flex; flex-direction: column; align-items: center; gap: 17px; padding-right: 2px; }
.page { width: 100%; max-width: 950px; background: #fff; border: 1px solid #c6c6c6; }
.page-end { height: 160px; flex: none; border-top: 0; padding: 0 83px 0 114px; }
.page-next { flex: 1; border-bottom: 0; }
.figure { display: block; width: 100%; }
.scroll { width: 16px; padding: 2px 1px 2px 0; display: flex; flex-direction: column; }
.scroll button, .scroll-thumb { border: 1px solid #777; background: #fff; }
.scroll button { height: 15px; flex: none; }
.scroll-before { flex: 200; background: #d9d9d9; }
.scroll-thumb { flex: 80; }
.scroll-after { flex: 174; background: #d9d9d9; }

/* Status bar */
.status { height: 22px; flex: none; display: flex; align-items: center; padding: 0 0 1px 8px; font-size: 11px; white-space: nowrap; background: #f3f2f1; border-top: 1px solid #c8c6c4; }
.s-page { width: 76px; }
.s-words { width: 66px; }
.s-proof { margin-right: 17px; }
.s-lang { width: 134px; }
.s-pred { width: 122px; }
.s-acc { margin-right: 3px; }
.status-right { margin-left: auto; display: flex; align-items: center; }
.focus { gap: 3px; margin-right: 10px; }
.view { width: 40px; height: 21px; }
.view-on { background: #d0cecc; }
.zoom-step { width: 9px; height: 20px; }
.view + .zoom-step { margin-left: 7px; }
.zoom { width: 100px; height: 16px; margin: 0 4px; appearance: none; background: linear-gradient(#666, #666) center / 100% 1px no-repeat; }
.zoom::-webkit-slider-thumb { appearance: none; width: 5px; height: 11px; background: #6a6a6a; }
.zoom-value { width: 48px; padding-right: 8px; text-align: right; }

/* Taskbar */
.taskbar { height: 40px; flex: none; display: flex; align-items: center; background: #1d1d1d; color: #fff; }
.start { width: 48px; height: 40px; }
.task-search { width: 344px; height: 40px; display: flex; align-items: center; gap: 11px; padding-left: 11px; color: #222; background: #f2f2f2; border: 1px solid #bbb; }
.task-search input { flex: 1; min-width: 0; padding: 0; border: 0; background: none; font-size: 14px; }
.task-search input::placeholder { color: #222; opacity: 1; }
.task-sys { width: 48px; height: 40px; }
.apps { display: flex; padding-left: 2px; }
.app { width: 49px; height: 40px; background: linear-gradient(#76b9ed, #76b9ed) center bottom / 0 2px no-repeat; }
.app-run { background-size: 40px 2px; }
.app-active { background-size: 100% 2px; background-color: #4a4a4a; }
.tray { margin-left: auto; height: 40px; display: flex; align-items: center; gap: 9px; font-size: 11px; }
.weather { gap: 8px; font-size: 13px; margin-right: 9px; }
.t-up { margin-right: 2px; }
.eng { margin-left: 2px; }
.clock { width: 60px; display: flex; flex-direction: column; align-items: center; line-height: 18px; white-space: nowrap; }
.bell { margin-left: 5px; }
.peek { width: 5px; height: 40px; margin-left: 20px; border-left: 1px solid #777; }
```
